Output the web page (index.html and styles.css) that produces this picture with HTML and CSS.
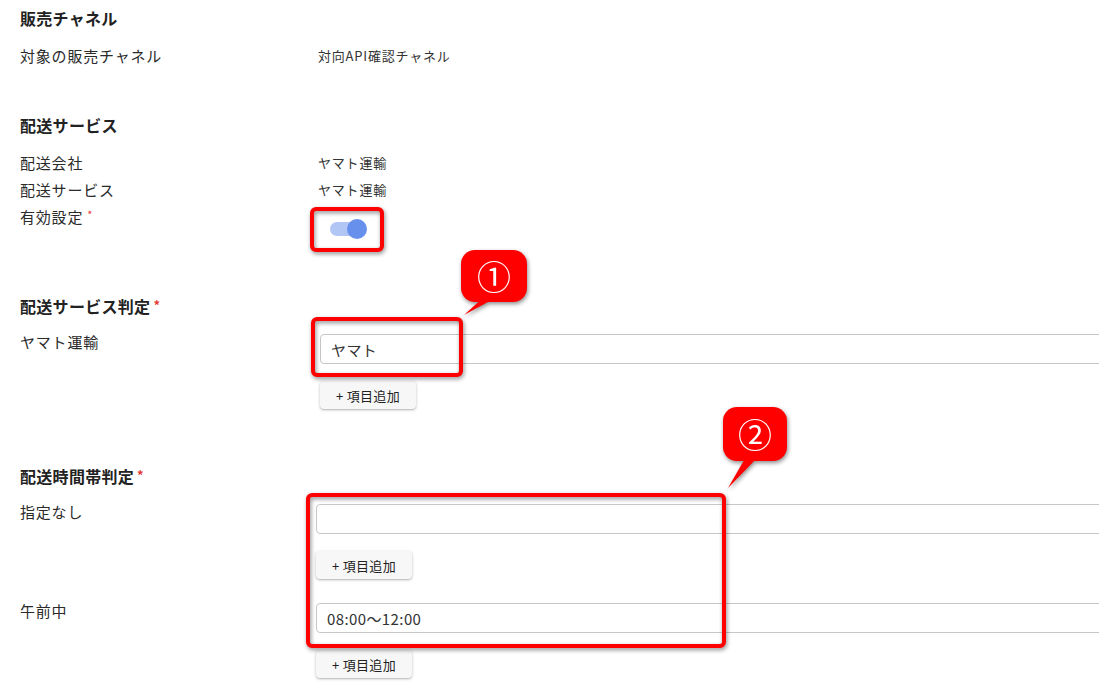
FILE: index.html
```html
<!DOCTYPE html>
<html lang="ja">
<head>
  <meta charset="UTF-8">
  <meta name="viewport" content="width=device-width, initial-scale=1.0">
  <title>配送設定</title>
  <link rel="stylesheet" href="styles.css">
</head>
<body>
  <div class="page">
    <section class="section section--compact">
      <h2 class="section-title">販売チャネル</h2>
      <div class="info-row">
        <span class="info-label">対象の販売チャネル</span>
        <span class="info-value">対向API確認チャネル</span>
      </div>
    </section>

    <section class="section">
      <h2 class="section-title">配送サービス</h2>
      <div class="info-row">
        <span class="info-label">配送会社</span>
        <span class="info-value">ヤマト運輸</span>
      </div>
      <div class="info-row">
        <span class="info-label">配送サービス</span>
        <span class="info-value">ヤマト運輸</span>
      </div>
      <div class="info-row">
        <span class="info-label">有効設定<span class="required">*</span></span>
        <div class="switch">
          <span class="switch-track"></span>
          <span class="switch-knob"></span>
        </div>
      </div>
    </section>

    <section class="section section--service">
      <h2 class="section-title">配送サービス判定<span class="required required--title">*</span></h2>
      <div class="field-row">
        <span class="field-label">ヤマト運輸</span>
        <div class="field-stack">
          <input class="field-input" type="text" value="ヤマト">
          <button class="add-button">+ 項目追加</button>
        </div>
      </div>
    </section>

    <section class="section section--slot">
      <h2 class="section-title">配送時間帯判定<span class="required required--title">*</span></h2>
      <div class="field-row">
        <span class="field-label">指定なし</span>
        <div class="field-stack">
          <input class="field-input" type="text" value="">
          <button class="add-button">+ 項目追加</button>
        </div>
      </div>
      <div class="field-row">
        <span class="field-label">午前中</span>
        <div class="field-stack">
          <input class="field-input" type="text" value="08:00〜12:00">
          <button class="add-button">+ 項目追加</button>
        </div>
      </div>
    </section>

    <!-- annotations drawn over the form -->
    <div class="mark mark--switch"></div>
    <div class="mark mark--service"></div>
    <div class="mark mark--slots"></div>

    <div class="callout callout--one">
      <svg class="callout-tail" width="66" height="66" viewBox="0 0 66 66">
        <polygon points="24,46 38,46 3,65" fill="#ff0000"/>
      </svg>
      <div class="callout-bubble">①</div>
    </div>

    <div class="callout callout--two">
      <svg class="callout-tail" width="64" height="82" viewBox="0 0 64 82">
        <polygon points="24,48 37,48 5,81" fill="#ff0000"/>
      </svg>
      <div class="callout-bubble callout-bubble--tall">②</div>
    </div>
  </div>
</body>
</html>
```

FILE: styles.css
```css
html, body { margin: 0; overflow: hidden; background: #fff; }
body { font-family: "Noto Sans CJK JP", "Noto Sans", sans-serif; color: #333; }

.page { position: relative; padding: 6px 0 0 20px; height: 691px; box-sizing: border-box; }

.section { margin-bottom: 55px; }
.section--compact { margin-bottom: 44px; }
.section-title { margin: 0 0 12px; font-size: 16px; line-height: 24px; font-weight: bold; color: #222; letter-spacing: 0.3px; }

.required { color: #e53935; font-size: 11px; line-height: 0; margin-left: 4px; vertical-align: 4px; font-weight: normal; }
.required--title { font-size: 13px; font-weight: bold; margin-left: 3px; vertical-align: 3px; }

.info-row { display: grid; grid-template-columns: 298px 1fr; line-height: 27px; }
.info-label { font-size: 15px; letter-spacing: 0.8px; color: #2a2a2a; }
.info-value { font-size: 13px; letter-spacing: 0.8px; color: #333; }

.switch { position: relative; width: 37px; height: 20px; margin: 16px 0 0 12px; }
.switch-track { position: absolute; left: 0; top: 3px; width: 34px; height: 14px; border-radius: 7px; background: #b2c6f6; }
.switch-knob { position: absolute; left: 17px; top: 0; width: 20px; height: 20px; border-radius: 50%; background: #6690ec; }

.field-row { display: grid; grid-template-columns: 298px minmax(0, 1fr); }
.field-row + .field-row { margin-top: 20px; }
.field-label { font-size: 15px; line-height: 23px; letter-spacing: 0.8px; color: #2a2a2a; }
.field-stack { display: flex; flex-direction: column; align-items: flex-start; padding-top: 4px; }
.section--service .field-stack { margin-left: 2px; }
.section--slot .field-stack { margin-left: -2px; }

.field-input { width: calc(100% + 40px); height: 30px; box-sizing: border-box; border: 1px solid #c6c6c6; border-radius: 4px; padding: 0 10px; font-family: "Noto Sans CJK JP", "Noto Sans", sans-serif; font-size: 15px; letter-spacing: 0.4px; color: #333; background: #fff; outline: none; }
.add-button { margin-top: 17px; width: 96px; height: 28px; border: 0; border-radius: 4px; background: #f7f7f7; box-shadow: 0 1px 3px rgba(0,0,0,0.25), 0 1px 1px rgba(0,0,0,0.08); font-family: "Noto Sans CJK JP", "Noto Sans", sans-serif; font-size: 13px; letter-spacing: 0.3px; color: #222; padding: 0; }

.mark { position: absolute; box-sizing: border-box; border: 4px solid #ff0000; border-radius: 6px; filter: drop-shadow(1px 2px 2px rgba(0,0,0,0.45)); }
.mark--switch { left: 310px; top: 207px; width: 74px; height: 45px; }
.mark--service { left: 311px; top: 317px; width: 152px; height: 60px; }
.mark--slots { left: 306px; top: 493px; width: 420px; height: 155px; }

.callout { position: absolute; filter: drop-shadow(1px 2px 2px rgba(0,0,0,0.45)); }
.callout--one { left: 461px; top: 250px; width: 66px; height: 66px; }
.callout--two { left: 723px; top: 407px; width: 64px; height: 82px; }
.callout-tail { position: absolute; left: 0; top: 0; }
.callout-bubble { position: relative; display: flex; align-items: center; justify-content: center; width: 66px; height: 52px; border-radius: 14px; background: #ff0000; color: #fff; font-size: 34px; line-height: 1; }
.callout-bubble--tall { width: 64px; height: 54px; }
```
